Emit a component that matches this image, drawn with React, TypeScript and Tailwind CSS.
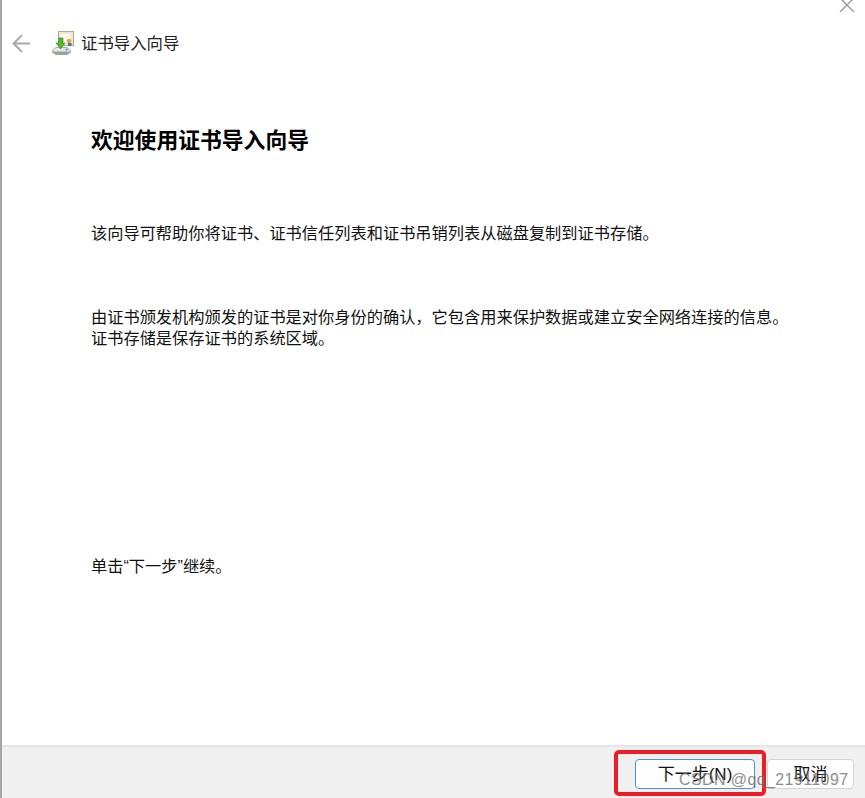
import React from 'react';
import { ArrowLeft, X } from 'lucide-react';

const cjk = 'font-["Liberation_Sans","Noto_Sans_CJK_SC",sans-serif]';

// small certificate-over-disk wizard icon
const WizardIcon = () => (
    <svg width="24" height="24" viewBox="0 0 24 24" className="shrink-0">
        <rect x="6.5" y="0.5" width="15" height="14" fill="#efe6cf" stroke="#b5a98f" />
        <rect x="9" y="3" width="10" height="9" fill="#fbf8ef" />
        <circle cx="17" cy="10" r="2.3" fill="#e8a33a" />
        <rect x="16" y="12" width="3.6" height="3" fill="#3a78c9" />
        <path d="M0.5 19.5 L4 16.5 H15 L18.5 19.5 V21.5 L15 23.5 H4 L0.5 21.5 Z" fill="#e6e8e6" stroke="#8a9090" strokeWidth="0.7" />
        <path d="M1 20.5 H18 V21.5 L15 23.3 H4 L1 21.5 Z" fill="#9aa0a0" />
        <circle cx="14.5" cy="18.5" r="1" fill="#3f8fd8" />
        <path d="M7 7 H11 V12 H13 L8.5 18 L4 12 H6.5 Z" fill="#57b52f" stroke="#2f8a1c" strokeWidth="0.6" />
    </svg>
);

const App: React.FC = () => {
    return (
        <div className={`relative flex h-[798px] w-[865px] flex-col overflow-hidden bg-white text-[#111] ${cjk}`}>
            <div className="flex min-h-0 flex-1 border-l-2 border-[#a6a6a6]">
                <div className="flex min-w-0 flex-1 flex-col">
                    {/* header */}
                    <div className="flex items-center pl-[6px] pt-[29px]">
                        <ArrowLeft className="h-[27px] w-[27px] text-[#a8a8a8]" strokeWidth={1.8} />
                        <div className="ml-[17px] flex items-center gap-[5px]">
                            <WizardIcon />
                            <span className="text-[16.4px] leading-[28px] text-[#222]">证书导入向导</span>
                        </div>
                    </div>

                    {/* body */}
                    <div className="flex flex-1 flex-col pl-[89px] pr-[40px]">
                        <h1 className="mt-[68px] text-[21.8px] font-bold leading-[32px] text-black">欢迎使用证书导入向导</h1>
                        <p className="mt-[66px] text-[16.23px] leading-[21px]">
                            该向导可帮助你将证书、证书信任列表和证书吊销列表从磁盘复制到证书存储。
                        </p>
                        <p className="mt-[63px] text-[16.23px] leading-[21px]">
                            由证书颁发机构颁发的证书是对你身份的确认，它包含用来保护数据或建立安全网络连接的信息。
                            <br />
                            证书存储是保存证书的系统区域。
                        </p>
                        <p className="mt-[207px] text-[16.23px] leading-[21px]">单击“下一步”继续。</p>
                    </div>

                    {/* footer */}
                    <div className="flex h-[53px] items-start justify-end gap-[12px] border-t-2 border-[#e6e6e6] bg-[#f0f0f0] pr-[11px] pt-[12px]">
                        <button className="h-[30px] w-[120px] rounded-[4px] border border-[#4a94d8] bg-[#fdfdfd] text-[17px] leading-none text-[#111]">
                            下一步(N)
                        </button>
                        <button className="h-[30px] w-[87px] rounded-[4px] border border-[#d4d4d4] bg-[#fdfdfd] text-[17px] leading-none text-[#111]">
                            取消
                        </button>
                    </div>
                </div>
            </div>

            {/* window close, cut by the crop */}
            <X className="absolute right-[5px] top-[-8px] h-[26px] w-[26px] text-[#9a9a9a]" strokeWidth={1.3} />

            {/* red highlight drawn on the screenshot */}
            <div className="pointer-events-none absolute left-[614px] top-[750px] h-[46px] w-[152px] rounded-[5px] border-[4px] border-[#ee1c25]" />

            {/* watermark */}
            <span className="pointer-events-none absolute left-[679px] top-[770px] font-['Liberation_Sans',sans-serif] text-[16px] leading-[20px] tracking-[0.4px] text-[#6f6f6f]/80">
                CSDN @qq_21911097
            </span>
        </div>
    );
};

export default App;
